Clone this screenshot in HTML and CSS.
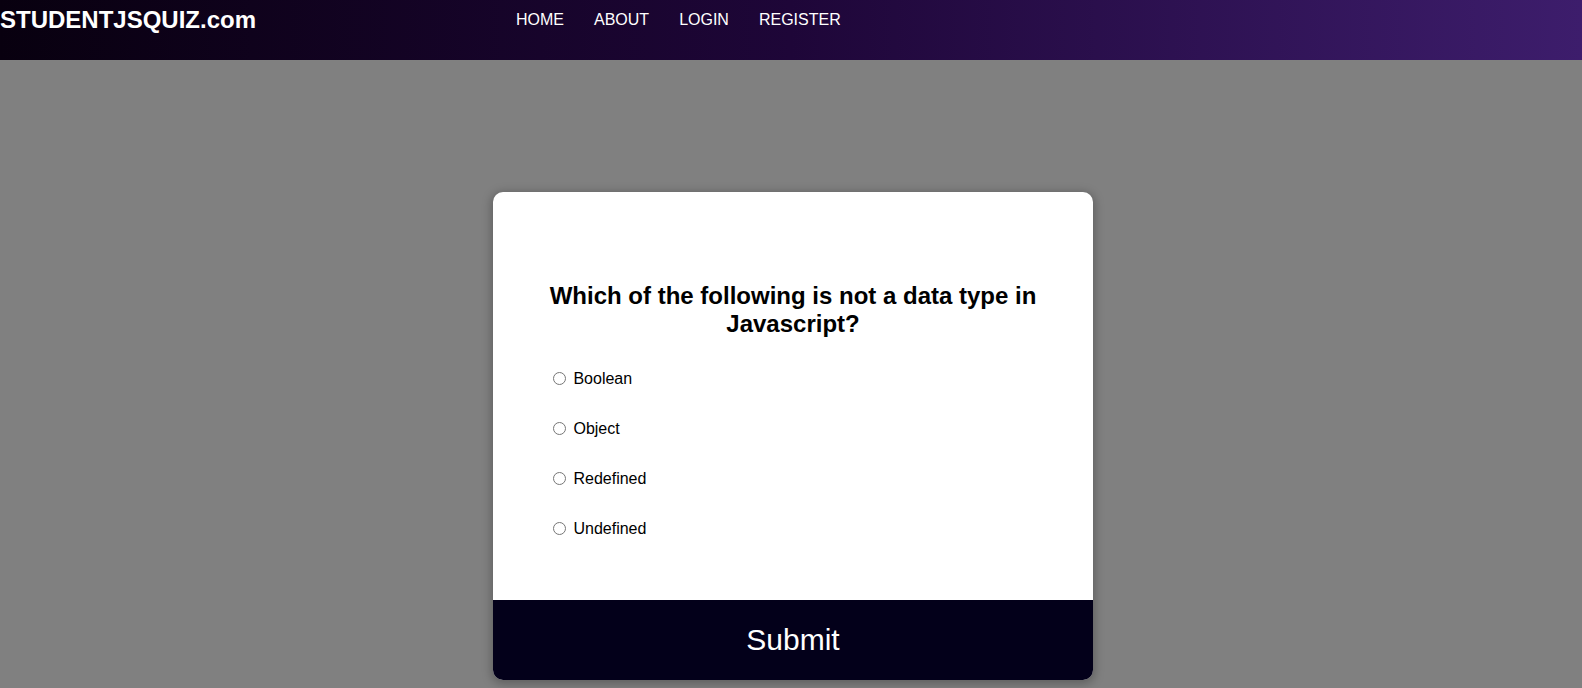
FILE: index.html
```html
<!DOCTYPE html>
<html lang="en">
<head>
<meta charset="utf-8">
<title>STUDENTJSQUIZ.com</title>
<link rel="stylesheet" href="styles.css">
</head>
<body>
<header class="topbar">
  <div class="logo">STUDENTJSQUIZ.com</div>
  <nav class="nav">
    <a href="#">HOME</a>
    <a href="#">ABOUT</a>
    <a href="#">LOGIN</a>
    <a href="#">REGISTER</a>
  </nav>
</header>
<main class="stage">
  <div class="quiz">
    <div class="quiz-body">
      <h2 class="question">Which of the following is not a data type in Javascript?</h2>
      <ul class="answers">
        <li><label><input type="radio" name="answer"> Boolean</label></li>
        <li><label><input type="radio" name="answer"> Object</label></li>
        <li><label><input type="radio" name="answer"> Redefined</label></li>
        <li><label><input type="radio" name="answer"> Undefined</label></li>
      </ul>
    </div>
    <button class="submit">Submit</button>
  </div>
</main>
</body>
</html>
```
FILE: styles.css
```css
html, body {
  margin: 0;
  padding: 0;
}
body {
  background: #808080;
  font-family: "Liberation Sans", Arial, sans-serif;
  color: #000;
  height: 688px;
  overflow: hidden;
}
.topbar {
  height: 60px;
  background: linear-gradient(90deg, #08000f 0%, #1e0638 50%, #3d1d6c 100%);
  display: grid;
  grid-template-columns: 501px 1fr;
  align-items: start;
}
.logo {
  color: #fff;
  font-weight: bold;
  font-size: 24px;
  line-height: 28px;
  padding-top: 6px;
}
.nav {
  display: flex;
  padding-top: 11px;
}
.nav a {
  color: #fff;
  text-decoration: none;
  font-size: 16px;
  line-height: 18px;
  padding: 0 15px;
}
.stage {
  display: flex;
  justify-content: center;
  padding-top: 132px;
  padding-left: 4px;
}
.quiz {
  width: 600px;
  background: #fff;
  border-radius: 10px;
  overflow: hidden;
  box-shadow: 0 2px 10px 2px rgba(0, 0, 0, 0.25);
}
.quiz-body {
  padding: 90px 55px 0 55px;
  height: 318px;
}
.question {
  margin: 0 -10px;
  font-size: 24px;
  line-height: 28px;
  text-align: center;
}
.answers {
  list-style: none;
  margin: 31px 0 0 0;
  padding: 0;
}
.answers li {
  font-size: 16px;
  line-height: 20px;
  height: 50px;
}
.answers input {
  margin: 0 3px 0 5px;
  width: 13px;
  height: 13px;
  vertical-align: -1px;
}
.submit {
  display: block;
  width: 100%;
  height: 80px;
  border: none;
  margin: 0;
  background: #03001a;
  color: #fff;
  font-family: "Liberation Sans", Arial, sans-serif;
  font-size: 30px;
}
```
